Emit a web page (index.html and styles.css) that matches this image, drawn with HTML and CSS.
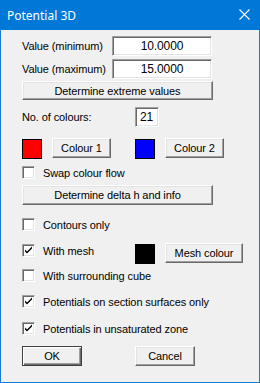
FILE: index.html
```html
<!DOCTYPE html>
<html>
<head>
<meta charset="utf-8">
<link rel="stylesheet" href="styles.css">
</head>
<body>
<div class="window">
  <div class="titlebar">
    <span class="title">Potential 3D</span>
    <svg class="close" width="11" height="11" viewBox="0 0 11 11"><path d="M0.5 0.5 L10.5 10.5 M10.5 0.5 L0.5 10.5" stroke="#fff" stroke-width="1.1" fill="none"/></svg>
  </div>
  <div class="content">
    <div class="row r-min">
      <span class="label lbl-val">Value (minimum)</span>
      <div class="edit wide">10.0000</div>
    </div>
    <div class="row r-max">
      <span class="label lbl-val">Value (maximum)</span>
      <div class="edit wide">15.0000</div>
    </div>
    <div class="btn full r-ext">Determine extreme values</div>
    <div class="row r-ncol">
      <span class="label lbl-n">No. of colours:</span>
      <div class="edit small">21</div>
    </div>
    <div class="row r-col">
      <div class="swatch red"></div>
      <div class="btn colbtn">Colour 1</div>
      <div class="swatch blue"></div>
      <div class="btn colbtn">Colour 2</div>
    </div>
    <label class="check r-swap"><span class="box"></span><span>Swap colour flow</span></label>
    <div class="btn full r-delta">Determine delta h and info</div>
    <label class="check r-cont"><span class="box"></span><span>Contours only</span></label>
    <div class="row r-mesh">
      <label class="check meshcheck"><span class="box checked"><svg viewBox="0 0 11 11" width="11" height="11"><path d="M2 4.5 L4 6.5 L9 1.5 L9 3.5 L4 8.5 L2 6.5 Z" fill="#000"/></svg></span><span>With mesh</span></label>
      <div class="swatch black"></div>
      <div class="btn meshbtn">Mesh colour</div>
    </div>
    <label class="check r-cube"><span class="box"></span><span>With surrounding cube</span></label>
    <label class="check r-sect"><span class="box checked"><svg viewBox="0 0 11 11" width="11" height="11"><path d="M2 4.5 L4 6.5 L9 1.5 L9 3.5 L4 8.5 L2 6.5 Z" fill="#000"/></svg></span><span>Potentials on section surfaces only</span></label>
    <label class="check r-unsat"><span class="box checked"><svg viewBox="0 0 11 11" width="11" height="11"><path d="M2 4.5 L4 6.5 L9 1.5 L9 3.5 L4 8.5 L2 6.5 Z" fill="#000"/></svg></span><span>Potentials in unsaturated zone</span></label>
    <div class="row r-ok">
      <div class="btn okbtn default">OK</div>
      <div class="btn okbtn cancel">Cancel</div>
    </div>
  </div>
</div>
</body>
</html>
```
FILE: styles.css
```css
html, body {
  margin: 0;
  padding: 0;
  background: #f0f0f0;
}
.window {
  width: 260px;
  height: 383px;
  box-sizing: border-box;
  border: 1px solid #1a79d0;
  border-top: none;
  background: #f0f0f0;
  font-family: "Liberation Sans", Arial, sans-serif;
  font-size: 11px;
  letter-spacing: -0.1px;
  color: #000;
}
.titlebar {
  height: 30px;
  margin: 0 -1px;
  background: #0078d7;
  color: #fff;
  display: flex;
  align-items: center;
  justify-content: space-between;
  padding: 0 10px 0 7px;
  letter-spacing: 0;
}
.title {
  font-family: "Noto Sans", "Open Sans", sans-serif;
  font-size: 12px;
  margin-top: 1px;
}
.close {
  display: block;
  margin-top: -1px;
}
.content {
  padding-left: 21px;
  display: flex;
  flex-direction: column;
  align-items: flex-start;
}
.row {
  display: flex;
  align-items: center;
}
.label {
  white-space: nowrap;
}
.lbl-val { width: 90px; }
.lbl-n { width: 113px; }
.edit {
  box-sizing: border-box;
  height: 20px;
  background: #fff;
  border-top: 1px solid #a0a0a0;
  border-left: 1px solid #a0a0a0;
  border-right: 1px solid #fff;
  border-bottom: 1px solid #fff;
  box-shadow: inset 1px 1px 0 #696969, inset -1px -1px 0 #e3e3e3;
  display: flex;
  align-items: center;
  font-size: 12px;
}
.edit.wide {
  width: 100px;
  justify-content: center;
}
.edit.small {
  width: 24px;
  padding-left: 4px;
}
.btn {
  box-sizing: border-box;
  height: 20px;
  background: #f0f0f0;
  border-top: 1px solid #fff;
  border-left: 1px solid #fff;
  border-right: 1px solid #696969;
  border-bottom: 1px solid #696969;
  box-shadow: inset -1px -1px 0 #a0a0a0, inset 1px 1px 0 #e3e3e3;
  display: flex;
  align-items: center;
  justify-content: center;
  white-space: nowrap;
}
.btn.full { width: 191px; }
.btn.default {
  border: 1px solid #404040;
  box-shadow: inset 1px 1px 0 #fff, inset -1px -1px 0 #696969, inset -2px -2px 0 #a0a0a0;
}
.r-min { margin-top: 6px; }
.r-max { margin-top: 3px; }
.r-ext { margin-top: 2px; height: 19px; }
.r-ncol { margin-top: 7px; }
.r-col { margin-top: 11px; align-items: flex-start; }
.swatch {
  box-sizing: border-box;
  width: 20px;
  height: 20px;
  border: 1px solid #000;
  margin-top: 1px;
}
.red { background: #ff0000; }
.blue { background: #0000ff; margin-left: 24px; }
.black { background: #000; margin-left: 13px; }
.colbtn { width: 59px; margin-left: 10px; }
.check {
  display: flex;
  align-items: center;
  height: 13px;
  white-space: nowrap;
}
.box {
  box-sizing: border-box;
  width: 13px;
  height: 13px;
  background: #fff;
  border-top: 1px solid #a0a0a0;
  border-left: 1px solid #a0a0a0;
  border-right: 1px solid #fff;
  border-bottom: 1px solid #fff;
  box-shadow: inset 1px 1px 0 #696969, inset -1px -1px 0 #e3e3e3;
  margin-right: 8px;
  display: flex;
  align-items: center;
  justify-content: center;
}
.box svg { display: block; }
.r-swap { margin-top: 7px; }
.r-delta { margin-top: 6px; }
.r-cont { margin-top: 13px; }
.r-mesh { margin-top: 12px; align-items: flex-start; }
.meshcheck { width: 100px; margin-top: 1px; }
.meshbtn { width: 78px; margin-left: 10px; }
.r-cube { margin-top: 5px; }
.r-sect { margin-top: 13px; }
.r-unsat { margin-top: 14px; }
.r-ok { margin-top: 11px; }
.okbtn { width: 60px; }
.cancel { margin-left: 53px; }
```
